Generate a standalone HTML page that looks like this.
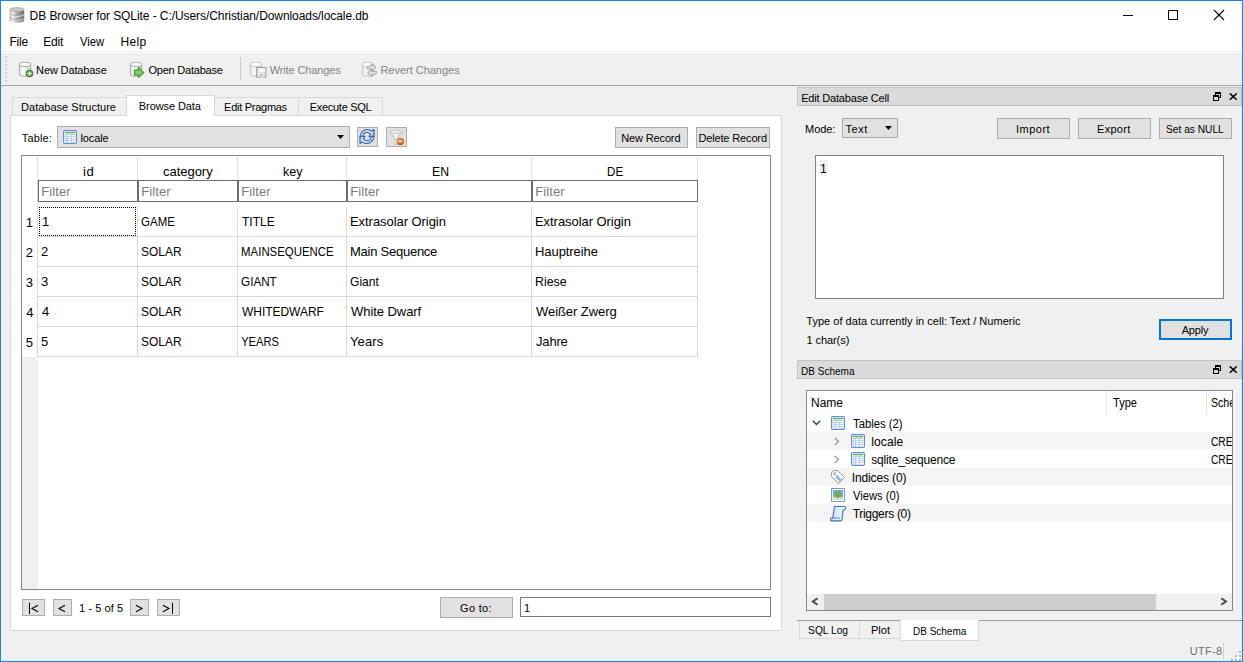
<!DOCTYPE html>
<html><head><meta charset="utf-8"><style>
html,body{margin:0;padding:0;}
body{width:1243px;height:662px;position:relative;overflow:hidden;background:#f0f0f0;font-family:"Liberation Sans",sans-serif;}
.t{position:absolute;white-space:nowrap;}
div,svg{position:absolute;}
</style></head><body>
<div style="position:absolute;left:1px;top:1px;width:1241px;height:52px;background:#fff;"></div>
<div style="position:absolute;left:1px;top:51px;width:1241px;height:1px;background:#f0f0f0;"></div>
<div style="position:absolute;left:1px;top:85px;width:1241px;height:1px;background:#a0a0a0;"></div>
<svg style="position:absolute;left:9px;top:7px" width="16" height="16" viewBox="0 0 16 16"><defs><linearGradient id="cy" x1="0" x2="1"><stop offset="0" stop-color="#a8a8a8"/><stop offset="0.18" stop-color="#f6f6f6"/><stop offset="0.45" stop-color="#b4b4b4"/><stop offset="1" stop-color="#6a6a6a"/></linearGradient></defs>
<path d="M0.8 2.5 v11 a7.2 2 0 0 0 14.4 0 v-11 z" fill="url(#cy)"/>
<ellipse cx="8" cy="2.5" rx="7.2" ry="2" fill="#c6c6c6" stroke="#a0a0a0" stroke-width="0.6"/>
<path d="M0.8 6.6 a7.2 2 0 0 0 14.4 0" fill="none" stroke="#8a8a8a" stroke-width="0.7"/>
<path d="M0.8 7.4 a7.2 2 0 0 0 14.4 0" fill="none" stroke="#eeeeee" stroke-width="0.8"/>
<path d="M0.8 10.6 a7.2 2 0 0 0 14.4 0" fill="none" stroke="#8a8a8a" stroke-width="0.7"/>
<path d="M0.8 11.4 a7.2 2 0 0 0 14.4 0" fill="none" stroke="#eeeeee" stroke-width="0.8"/></svg>
<div class="t" style="left:29.6px;top:9px;font-size:12px;line-height:14px;color:#000;letter-spacing:-0.074px;">DB Browser for SQLite - C:/Users/Christian/Downloads/locale.db</div>
<div style="position:absolute;left:1123px;top:15px;width:10px;height:1px;background:#000;"></div>
<div style="position:absolute;left:1168px;top:10px;width:10px;height:10px;box-sizing:border-box;border:1px solid #000;"></div>
<svg style="position:absolute;left:1213px;top:9px" width="12" height="12" viewBox="0 0 12 12"><path d="M1 1 L11 11 M11 1 L1 11" stroke="#000" stroke-width="1.1"/></svg>
<div class="t" style="left:9.45px;top:35px;font-size:12px;line-height:14px;color:#000;letter-spacing:-0.2px;">File</div>
<div class="t" style="left:43.3px;top:35px;font-size:12px;line-height:14px;color:#000;letter-spacing:-0.233px;">Edit</div>
<div class="t" style="left:80.0px;top:35px;font-size:12px;line-height:14px;color:#000;transform:scaleX(0.9385);transform-origin:0px 0;">View</div>
<div class="t" style="left:120.5px;top:35px;font-size:12px;line-height:14px;color:#000;letter-spacing:0.367px;">Help</div>
<div style="position:absolute;left:6px;top:56px;width:1px;height:1px;background:#a0a0a0;"></div>
<div style="position:absolute;left:5px;top:57px;width:1px;height:1px;background:#c8c8c8;"></div>
<div style="position:absolute;left:6px;top:60px;width:1px;height:1px;background:#a0a0a0;"></div>
<div style="position:absolute;left:5px;top:61px;width:1px;height:1px;background:#c8c8c8;"></div>
<div style="position:absolute;left:6px;top:64px;width:1px;height:1px;background:#a0a0a0;"></div>
<div style="position:absolute;left:5px;top:65px;width:1px;height:1px;background:#c8c8c8;"></div>
<div style="position:absolute;left:6px;top:68px;width:1px;height:1px;background:#a0a0a0;"></div>
<div style="position:absolute;left:5px;top:69px;width:1px;height:1px;background:#c8c8c8;"></div>
<div style="position:absolute;left:6px;top:72px;width:1px;height:1px;background:#a0a0a0;"></div>
<div style="position:absolute;left:5px;top:73px;width:1px;height:1px;background:#c8c8c8;"></div>
<div style="position:absolute;left:6px;top:76px;width:1px;height:1px;background:#a0a0a0;"></div>
<div style="position:absolute;left:5px;top:77px;width:1px;height:1px;background:#c8c8c8;"></div>
<div style="position:absolute;left:6px;top:80px;width:1px;height:1px;background:#a0a0a0;"></div>
<div style="position:absolute;left:5px;top:81px;width:1px;height:1px;background:#c8c8c8;"></div>
<div style="position:absolute;left:240px;top:57px;width:1px;height:23px;background:#c8c8c8;"></div>
<svg style="position:absolute;left:18px;top:60px" width="16" height="18" viewBox="0 0 16 18"><defs><linearGradient id="cga" x1="0" x2="1"><stop offset="0" stop-color="#e0e0e0"/><stop offset="0.3" stop-color="#fafafa"/><stop offset="1" stop-color="#d4d4d4"/></linearGradient></defs>
<path d="M1.4 4.4 v9.5 a5.6 2.2 0 0 0 11.2 0 v-9.5" fill="url(#cga)" stroke="#b0b0b0" stroke-width="1.1"/>
<ellipse cx="7" cy="4.4" rx="5.6" ry="2.2" fill="#fcfcfc" stroke="#b0b0b0" stroke-width="1.1"/><circle cx="11.5" cy="13.5" r="3.5" fill="#4c9c34" stroke="#2f7a1e" stroke-width="0.7"/><path d="M11.5 11.4 v4.2 M9.4 13.5 h4.2" stroke="#fff" stroke-width="1.4"/></svg>
<div class="t" style="left:36.1px;top:64px;font-size:11px;line-height:12px;color:#000;letter-spacing:-0.136px;">New Database</div>
<svg style="position:absolute;left:129px;top:60px" width="18" height="18" viewBox="0 0 18 18"><defs><linearGradient id="cgb" x1="0" x2="1"><stop offset="0" stop-color="#e0e0e0"/><stop offset="0.3" stop-color="#fafafa"/><stop offset="1" stop-color="#d4d4d4"/></linearGradient></defs>
<path d="M1.4 4.4 v9.5 a5.6 2.2 0 0 0 11.2 0 v-9.5" fill="url(#cgb)" stroke="#b0b0b0" stroke-width="1.1"/>
<ellipse cx="7" cy="4.4" rx="5.6" ry="2.2" fill="#fcfcfc" stroke="#b0b0b0" stroke-width="1.1"/><path d="M5.5 10 h4 v-2.4 l5.2 5 l-5.2 4.8 v-2.6 h-4 z" fill="#8cc77a" stroke="#3a9a22" stroke-width="1.2" stroke-linejoin="round"/></svg>
<div class="t" style="left:148.5px;top:64px;font-size:11px;line-height:12px;color:#000;letter-spacing:-0.225px;">Open Database</div>
<svg style="position:absolute;left:249px;top:60px" width="18" height="18" viewBox="0 0 18 18"><defs><linearGradient id="cgc" x1="0" x2="1"><stop offset="0" stop-color="#e0e0e0"/><stop offset="0.3" stop-color="#fafafa"/><stop offset="1" stop-color="#d4d4d4"/></linearGradient></defs>
<path d="M1.4 4.4 v9.5 a5.6 2.2 0 0 0 11.2 0 v-9.5" fill="url(#cgc)" stroke="#cccccc" stroke-width="1.1"/>
<ellipse cx="7" cy="4.4" rx="5.6" ry="2.2" fill="#fcfcfc" stroke="#cccccc" stroke-width="1.1"/><rect x="7.5" y="7.5" width="9.5" height="9.5" fill="#dcdcdc" stroke="#a4a4a4"/><rect x="8.6" y="8.5" width="7.3" height="3.2" fill="#fff"/><rect x="9.2" y="9.2" width="1" height="1.2" fill="#9a9a9a"/><rect x="9.5" y="13.2" width="5.5" height="3" fill="#fff"/><rect x="10.2" y="14.1" width="4" height="1.2" fill="#a0a0a0"/></svg>
<div class="t" style="left:269.7px;top:64px;font-size:11px;line-height:12px;color:#838383;letter-spacing:-0.125px;">Write Changes</div>
<svg style="position:absolute;left:361px;top:60px" width="18" height="18" viewBox="0 0 18 18"><defs><linearGradient id="cgd" x1="0" x2="1"><stop offset="0" stop-color="#e0e0e0"/><stop offset="0.3" stop-color="#fafafa"/><stop offset="1" stop-color="#d4d4d4"/></linearGradient></defs>
<path d="M1.4 4.4 v9.5 a5.6 2.2 0 0 0 11.2 0 v-9.5" fill="url(#cgd)" stroke="#cccccc" stroke-width="1.1"/>
<ellipse cx="7" cy="4.4" rx="5.6" ry="2.2" fill="#fcfcfc" stroke="#cccccc" stroke-width="1.1"/><path d="M5.5 8.5 C6 6.5 8 6 10.5 6 v-2.2 l4.5 3.7 l-4.5 3.7 v-2.2 C8.5 9 7 9.2 5.5 8.5 z" fill="#e0e0e0" stroke="#989898" stroke-width="0.9"/><path d="M16 12 C15.5 14 13.5 14.5 11 14.5 v2.2 l-4.5 -3.7 l4.5 -3.7 v2.2 C13 11.5 14.5 11.3 16 12 z" fill="#e0e0e0" stroke="#989898" stroke-width="0.9"/></svg>
<div class="t" style="left:380.4px;top:64px;font-size:11px;line-height:12px;color:#838383;letter-spacing:-0.015px;">Revert Changes</div>
<div style="position:absolute;left:10px;top:115px;width:772px;height:516px;box-sizing:border-box;border:1px solid #d9d9d9;background:#fff;"></div>
<div style="position:absolute;left:12px;top:97px;width:116px;height:19px;box-sizing:border-box;border:1px solid #d9d9d9;background:#f0f0f0;"></div>
<div style="position:absolute;left:214px;top:97px;width:85px;height:19px;box-sizing:border-box;border:1px solid #d9d9d9;background:#f0f0f0;"></div>
<div style="position:absolute;left:298px;top:97px;width:85px;height:19px;box-sizing:border-box;border:1px solid #d9d9d9;background:#f0f0f0;"></div>
<div style="left:126px;top:95px;width:89px;height:21px;box-sizing:border-box;border:1px solid #d9d9d9;border-bottom:none;background:#fff"></div>
<div class="t" style="left:21.1px;top:101px;font-size:11px;line-height:12px;color:#000;letter-spacing:0.006px;">Database Structure</div>
<div class="t" style="left:138.8px;top:100px;font-size:11px;line-height:12px;color:#000;letter-spacing:-0.08px;">Browse Data</div>
<div class="t" style="left:224.1px;top:101px;font-size:11px;line-height:12px;color:#000;letter-spacing:-0.273px;">Edit Pragmas</div>
<div class="t" style="left:309.8px;top:101px;font-size:11px;line-height:12px;color:#000;letter-spacing:-0.3px;">Execute SQL</div>
<div class="t" style="left:21.8px;top:132px;font-size:11px;line-height:12px;color:#000;letter-spacing:0.12px;">Table:</div>
<div style="position:absolute;left:57px;top:126px;width:293px;height:22px;box-sizing:border-box;border:1px solid #adadad;background:#e1e1e1;"></div>
<svg style="position:absolute;left:63px;top:130px" width="14" height="14" viewBox="0 0 14 14"><rect x="0.6" y="0.6" width="12.8" height="12.8" rx="1.2" fill="#fff" stroke="#5d8fd6" stroke-width="1.2"/>
<rect x="2" y="2" width="10" height="1.3" fill="#5bb45b"/>
<rect x="2" y="4" width="10" height="8.4" fill="#b4cdf0"/><rect x="2.6" y="5" width="1.4" height="1.1" fill="#fff"/><rect x="4.9" y="5" width="3" height="1.1" fill="#fff"/><rect x="8.9" y="5" width="3.2" height="1.1" fill="#fff"/><rect x="2.6" y="7" width="1.4" height="1.1" fill="#fff"/><rect x="4.9" y="7" width="3" height="1.1" fill="#fff"/><rect x="8.9" y="7" width="3.2" height="1.1" fill="#fff"/><rect x="2.6" y="9" width="1.4" height="1.1" fill="#fff"/><rect x="4.9" y="9" width="3" height="1.1" fill="#fff"/><rect x="8.9" y="9" width="3.2" height="1.1" fill="#fff"/><rect x="2.6" y="11" width="1.4" height="1.1" fill="#fff"/><rect x="4.9" y="11" width="3" height="1.1" fill="#fff"/><rect x="8.9" y="11" width="3.2" height="1.1" fill="#fff"/></svg>
<div class="t" style="left:80.4px;top:132px;font-size:11px;line-height:12px;color:#000;letter-spacing:-0.08px;">locale</div>
<svg style="position:absolute;left:337px;top:135px" width="7" height="4" viewBox="0 0 7 4"><path d="M0 0 h7 l-3.5 4 z" fill="#000"/></svg>
<div style="position:absolute;left:357px;top:127px;width:21px;height:20px;box-sizing:border-box;border:1px solid #adadad;background:#e1e1e1;"></div>
<svg style="position:absolute;left:359px;top:128px" width="17" height="18" viewBox="0 0 17 18"><defs><linearGradient id="rg" x1="0" y1="0" x2="1" y2="1"><stop offset="0" stop-color="#9fc0ee"/><stop offset="0.5" stop-color="#f2f7ff"/><stop offset="1" stop-color="#7aa3de"/></linearGradient></defs>
<path d="M1 8.5 C1.5 4 5 1.5 8 1.5 C10 1.5 11.5 2.2 12.5 3.2 L15 1.5 L15 8.8 L10 8.8 L11.5 6.2 C10.5 5 9.3 4.3 8 4.3 C6 4.3 4 6 3.6 8.5 Z" fill="url(#rg)" stroke="#2c62b2" stroke-width="1.1" stroke-linejoin="round"/>
<path d="M15 8.5 C14.5 13 11 15.5 8 15.5 C6 15.5 4.5 14.8 3.5 13.8 L1 15.5 L1 8.2 L6 8.2 L4.5 10.8 C5.5 12 6.7 12.7 8 12.7 C10 12.7 12 11 12.4 8.5 Z" fill="url(#rg)" stroke="#2c62b2" stroke-width="1.1" stroke-linejoin="round"/></svg>
<div style="position:absolute;left:386px;top:127px;width:21px;height:20px;box-sizing:border-box;border:1px solid #adadad;background:#e1e1e1;"></div>
<svg style="position:absolute;left:388px;top:128px" width="18" height="18" viewBox="0 0 18 18"><defs><linearGradient id="fg" x1="0" x2="1"><stop offset="0" stop-color="#d4d4d4"/><stop offset="0.5" stop-color="#fafafa"/><stop offset="1" stop-color="#c4c4c4"/></linearGradient>
<radialGradient id="og" cx="0.4" cy="0.35" r="0.7"><stop offset="0" stop-color="#ff9d40"/><stop offset="1" stop-color="#c94500"/></radialGradient></defs>
<path d="M1.5 3.8 L7 10.5 L7 16.5 L9 16.5 L9 10.5 L14.5 3.8 Z" fill="url(#fg)" stroke="#b8b8b8" stroke-width="0.9" stroke-linejoin="round"/>
<ellipse cx="8" cy="3.8" rx="6.5" ry="1.7" fill="#ececec" stroke="#c0c0c0" stroke-width="0.8"/>
<circle cx="12.4" cy="13.4" r="3.6" fill="url(#og)"/><rect x="10.3" y="12.7" width="4.2" height="1.4" fill="#fff"/></svg>
<div style="position:absolute;left:615px;top:127px;width:73px;height:21px;box-sizing:border-box;border:1px solid #adadad;background:#e1e1e1;"></div>
<div class="t" style="left:621.2px;top:132px;font-size:11px;line-height:12px;color:#000;letter-spacing:-0.133px;">New Record</div>
<div style="position:absolute;left:696px;top:127px;width:74px;height:21px;box-sizing:border-box;border:1px solid #adadad;background:#e1e1e1;"></div>
<div class="t" style="left:698.4px;top:132px;font-size:11px;line-height:12px;color:#000;letter-spacing:-0.142px;">Delete Record</div>
<div style="position:absolute;left:21px;top:155px;width:750px;height:435px;box-sizing:border-box;border:1px solid #828790;background:#fff;"></div>
<div style="position:absolute;left:22px;top:357px;width:16px;height:232px;background:#f0f0f0;"></div>
<div style="position:absolute;left:37px;top:156px;width:1px;height:24px;background:#e5e5e5;"></div>
<div style="position:absolute;left:137px;top:156px;width:1px;height:24px;background:#e5e5e5;"></div>
<div style="position:absolute;left:237px;top:156px;width:1px;height:24px;background:#e5e5e5;"></div>
<div style="position:absolute;left:346px;top:156px;width:1px;height:24px;background:#e5e5e5;"></div>
<div style="position:absolute;left:531px;top:156px;width:1px;height:24px;background:#e5e5e5;"></div>
<div style="position:absolute;left:697px;top:156px;width:1px;height:24px;background:#e5e5e5;"></div>
<div class="t" style="left:82.9px;top:164px;font-size:13px;line-height:15px;color:#000;letter-spacing:0.6px;">id</div>
<div class="t" style="left:163.1px;top:164px;font-size:13px;line-height:15px;color:#000;letter-spacing:-0.043px;">category</div>
<div class="t" style="left:283.3px;top:164px;font-size:13px;line-height:15px;color:#000;transform:scaleX(0.9632);transform-origin:1px 0;">key</div>
<div class="t" style="left:432.0px;top:164px;font-size:13px;line-height:15px;color:#000;transform:scaleX(0.9438);transform-origin:1px 0;">EN</div>
<div class="t" style="left:606.7px;top:164px;font-size:13px;line-height:15px;color:#000;transform:scaleX(0.8882);transform-origin:1px 0;">DE</div>
<div style="position:absolute;left:38px;top:180px;width:100px;height:22px;box-sizing:border-box;border:1px solid #6d6d6d;background:#fff;"></div>
<div class="t" style="left:41.3px;top:184px;font-size:13px;line-height:15px;color:#7b7b7b;letter-spacing:0.08px;">Filter</div>
<div style="position:absolute;left:138px;top:180px;width:100px;height:22px;box-sizing:border-box;border:1px solid #6d6d6d;background:#fff;"></div>
<div class="t" style="left:141.3px;top:184px;font-size:13px;line-height:15px;color:#7b7b7b;letter-spacing:0.08px;">Filter</div>
<div style="position:absolute;left:238px;top:180px;width:109px;height:22px;box-sizing:border-box;border:1px solid #6d6d6d;background:#fff;"></div>
<div class="t" style="left:241.3px;top:184px;font-size:13px;line-height:15px;color:#7b7b7b;letter-spacing:0.08px;">Filter</div>
<div style="position:absolute;left:347px;top:180px;width:185px;height:22px;box-sizing:border-box;border:1px solid #6d6d6d;background:#fff;"></div>
<div class="t" style="left:350.3px;top:184px;font-size:13px;line-height:15px;color:#7b7b7b;letter-spacing:0.08px;">Filter</div>
<div style="position:absolute;left:532px;top:180px;width:166px;height:22px;box-sizing:border-box;border:1px solid #6d6d6d;background:#fff;"></div>
<div class="t" style="left:535.3px;top:184px;font-size:13px;line-height:15px;color:#7b7b7b;letter-spacing:0.08px;">Filter</div>
<div style="position:absolute;left:37px;top:180px;width:1px;height:177px;background:#d8d8d8;"></div>
<div style="position:absolute;left:38px;top:236px;width:660px;height:1px;background:#d8d8d8;"></div>
<div style="position:absolute;left:137px;top:207px;width:1px;height:30px;background:#d8d8d8;"></div>
<div style="position:absolute;left:237px;top:207px;width:1px;height:30px;background:#d8d8d8;"></div>
<div style="position:absolute;left:346px;top:207px;width:1px;height:30px;background:#d8d8d8;"></div>
<div style="position:absolute;left:531px;top:207px;width:1px;height:30px;background:#d8d8d8;"></div>
<div style="position:absolute;left:697px;top:207px;width:1px;height:30px;background:#d8d8d8;"></div>
<div class="t" style="left:25.8px;top:215px;font-size:13px;line-height:15px;color:#000;">1</div>
<div class="t" style="left:41.9px;top:214px;font-size:13px;line-height:15px;color:#000;">1</div>
<div class="t" style="left:141.0px;top:214px;font-size:13px;line-height:15px;color:#000;transform:scaleX(0.8811);transform-origin:1px 0;">GAME</div>
<div class="t" style="left:242.0px;top:214px;font-size:13px;line-height:15px;color:#000;transform:scaleX(0.9229);transform-origin:0px 0;">TITLE</div>
<div class="t" style="left:350.0px;top:214px;font-size:13px;line-height:15px;color:#000;letter-spacing:-0.056px;">Extrasolar Origin</div>
<div class="t" style="left:535.0px;top:214px;font-size:13px;line-height:15px;color:#000;letter-spacing:-0.056px;">Extrasolar Origin</div>
<div style="position:absolute;left:38px;top:266px;width:660px;height:1px;background:#d8d8d8;"></div>
<div style="position:absolute;left:137px;top:236px;width:1px;height:31px;background:#d8d8d8;"></div>
<div style="position:absolute;left:237px;top:236px;width:1px;height:31px;background:#d8d8d8;"></div>
<div style="position:absolute;left:346px;top:236px;width:1px;height:31px;background:#d8d8d8;"></div>
<div style="position:absolute;left:531px;top:236px;width:1px;height:31px;background:#d8d8d8;"></div>
<div style="position:absolute;left:697px;top:236px;width:1px;height:31px;background:#d8d8d8;"></div>
<div class="t" style="left:25.8px;top:245px;font-size:13px;line-height:15px;color:#000;">2</div>
<div class="t" style="left:40.9px;top:244px;font-size:13px;line-height:15px;color:#000;">2</div>
<div class="t" style="left:141.0px;top:244px;font-size:13px;line-height:15px;color:#000;transform:scaleX(0.919);transform-origin:1px 0;">SOLAR</div>
<div class="t" style="left:241.0px;top:244px;font-size:13px;line-height:15px;color:#000;transform:scaleX(0.8769);transform-origin:1px 0;">MAINSEQUENCE</div>
<div class="t" style="left:350.0px;top:244px;font-size:13px;line-height:15px;color:#000;letter-spacing:-0.25px;">Main Sequence</div>
<div class="t" style="left:535.0px;top:244px;font-size:13px;line-height:15px;color:#000;letter-spacing:-0.067px;">Hauptreihe</div>
<div style="position:absolute;left:38px;top:296px;width:660px;height:1px;background:#d8d8d8;"></div>
<div style="position:absolute;left:137px;top:266px;width:1px;height:31px;background:#d8d8d8;"></div>
<div style="position:absolute;left:237px;top:266px;width:1px;height:31px;background:#d8d8d8;"></div>
<div style="position:absolute;left:346px;top:266px;width:1px;height:31px;background:#d8d8d8;"></div>
<div style="position:absolute;left:531px;top:266px;width:1px;height:31px;background:#d8d8d8;"></div>
<div style="position:absolute;left:697px;top:266px;width:1px;height:31px;background:#d8d8d8;"></div>
<div class="t" style="left:25.8px;top:275px;font-size:13px;line-height:15px;color:#000;">3</div>
<div class="t" style="left:40.9px;top:274px;font-size:13px;line-height:15px;color:#000;">3</div>
<div class="t" style="left:141.0px;top:274px;font-size:13px;line-height:15px;color:#000;transform:scaleX(0.919);transform-origin:1px 0;">SOLAR</div>
<div class="t" style="left:241.0px;top:274px;font-size:13px;line-height:15px;color:#000;transform:scaleX(0.8974);transform-origin:1px 0;">GIANT</div>
<div class="t" style="left:350.0px;top:274px;font-size:13px;line-height:15px;color:#000;transform:scaleX(0.9267);transform-origin:1px 0;">Giant</div>
<div class="t" style="left:535.0px;top:274px;font-size:13px;line-height:15px;color:#000;transform:scaleX(0.95);transform-origin:1px 0;">Riese</div>
<div style="position:absolute;left:38px;top:326px;width:660px;height:1px;background:#d8d8d8;"></div>
<div style="position:absolute;left:137px;top:296px;width:1px;height:31px;background:#d8d8d8;"></div>
<div style="position:absolute;left:237px;top:296px;width:1px;height:31px;background:#d8d8d8;"></div>
<div style="position:absolute;left:346px;top:296px;width:1px;height:31px;background:#d8d8d8;"></div>
<div style="position:absolute;left:531px;top:296px;width:1px;height:31px;background:#d8d8d8;"></div>
<div style="position:absolute;left:697px;top:296px;width:1px;height:31px;background:#d8d8d8;"></div>
<div class="t" style="left:26.3px;top:305px;font-size:13px;line-height:15px;color:#000;">4</div>
<div class="t" style="left:41.9px;top:304px;font-size:13px;line-height:15px;color:#000;">4</div>
<div class="t" style="left:141.0px;top:304px;font-size:13px;line-height:15px;color:#000;transform:scaleX(0.919);transform-origin:1px 0;">SOLAR</div>
<div class="t" style="left:242.0px;top:304px;font-size:13px;line-height:15px;color:#000;transform:scaleX(0.9191);transform-origin:0px 0;">WHITEDWARF</div>
<div class="t" style="left:351.0px;top:304px;font-size:13px;line-height:15px;color:#000;letter-spacing:-0.06px;">White Dwarf</div>
<div class="t" style="left:536.0px;top:304px;font-size:13px;line-height:15px;color:#000;letter-spacing:-0.064px;">Weißer Zwerg</div>
<div style="position:absolute;left:38px;top:356px;width:660px;height:1px;background:#d8d8d8;"></div>
<div style="position:absolute;left:137px;top:326px;width:1px;height:31px;background:#d8d8d8;"></div>
<div style="position:absolute;left:237px;top:326px;width:1px;height:31px;background:#d8d8d8;"></div>
<div style="position:absolute;left:346px;top:326px;width:1px;height:31px;background:#d8d8d8;"></div>
<div style="position:absolute;left:531px;top:326px;width:1px;height:31px;background:#d8d8d8;"></div>
<div style="position:absolute;left:697px;top:326px;width:1px;height:31px;background:#d8d8d8;"></div>
<div class="t" style="left:25.8px;top:335px;font-size:13px;line-height:15px;color:#000;">5</div>
<div class="t" style="left:40.9px;top:334px;font-size:13px;line-height:15px;color:#000;">5</div>
<div class="t" style="left:141.0px;top:334px;font-size:13px;line-height:15px;color:#000;transform:scaleX(0.919);transform-origin:1px 0;">SOLAR</div>
<div class="t" style="left:241.0px;top:334px;font-size:13px;line-height:15px;color:#000;transform:scaleX(0.8581);transform-origin:1px 0;">YEARS</div>
<div class="t" style="left:350.0px;top:334px;font-size:13px;line-height:15px;color:#000;letter-spacing:0.125px;">Years</div>
<div class="t" style="left:536.0px;top:334px;font-size:13px;line-height:15px;color:#000;letter-spacing:-0.175px;">Jahre</div>
<div style="left:39px;top:207px;width:97px;height:29px;box-sizing:border-box;border:1px dotted #000"></div>
<div style="position:absolute;left:22px;top:599px;width:23px;height:17px;box-sizing:border-box;border:1px solid #adadad;background:#e1e1e1;"></div>
<div style="position:absolute;left:53px;top:599px;width:19px;height:17px;box-sizing:border-box;border:1px solid #adadad;background:#e1e1e1;"></div>
<div style="position:absolute;left:130px;top:599px;width:19px;height:17px;box-sizing:border-box;border:1px solid #adadad;background:#e1e1e1;"></div>
<div style="position:absolute;left:157px;top:599px;width:23px;height:17px;box-sizing:border-box;border:1px solid #adadad;background:#e1e1e1;"></div>
<svg style="position:absolute;left:20px;top:600px" width="170" height="16" viewBox="0 0 170 16"><g fill="none" stroke="#000" stroke-width="1.05"><path d="M9.5 2.8 V14"/><path d="M18 5.3 L12 8.5 L18 11.7"/><path d="M45 5.3 L39 8.5 L45 11.7"/><path d="M116 5.3 L122 8.5 L116 11.7"/><path d="M143 5.3 L149 8.5 L143 11.7"/><path d="M152.5 2.8 V14"/></g></svg>
<div class="t" style="left:79.1px;top:602px;font-size:11px;line-height:12px;color:#000;letter-spacing:0.056px;">1 - 5 of 5</div>
<div style="position:absolute;left:440px;top:597px;width:73px;height:21px;box-sizing:border-box;border:1px solid #adadad;background:#e1e1e1;"></div>
<div class="t" style="left:460.1px;top:602px;font-size:11px;line-height:12px;color:#000;letter-spacing:0.3px;">Go to:</div>
<div style="position:absolute;left:520px;top:597px;width:251px;height:20px;box-sizing:border-box;border:1px solid #7a7a7a;background:#fff;"></div>
<div class="t" style="left:523.9px;top:602px;font-size:11px;line-height:12px;color:#000;">1</div>
<div style="position:absolute;left:797px;top:87px;width:445px;height:19px;box-sizing:border-box;border:1px solid #c2c2c2;background:#dadada;"></div>
<div class="t" style="left:801.2px;top:92px;font-size:11px;line-height:12px;color:#000;letter-spacing:-0.182px;">Edit Database Cell</div>
<svg style="position:absolute;left:1213px;top:92px" width="9" height="9" viewBox="0 0 9 9"><rect x="2" y="0" width="6" height="2" fill="#000"/><rect x="7" y="0" width="1" height="6" fill="#000"/><rect x="6" y="5" width="2" height="1" fill="#000"/><rect x="2" y="0" width="1" height="3" fill="#000"/><rect x="0" y="3" width="6" height="2" fill="#000"/><rect x="0" y="3" width="1" height="6" fill="#000"/><rect x="5" y="3" width="1" height="6" fill="#000"/><rect x="0" y="8" width="6" height="1" fill="#000"/></svg>
<svg style="position:absolute;left:1229px;top:93px" width="9" height="8" viewBox="0 0 9 8"><path d="M0.8 0.4 L7.7 6.8 M7.7 0.4 L0.8 6.8" stroke="#000" stroke-width="1.5"/></svg>
<div class="t" style="left:805.1px;top:123px;font-size:11px;line-height:12px;color:#000;letter-spacing:-0.075px;">Mode:</div>
<div style="position:absolute;left:842px;top:118px;width:56px;height:20px;box-sizing:border-box;border:1px solid #adadad;background:#e1e1e1;"></div>
<div class="t" style="left:845.4px;top:123px;font-size:11px;line-height:12px;color:#000;letter-spacing:0.6px;">Text</div>
<svg style="position:absolute;left:885px;top:126px" width="7" height="4" viewBox="0 0 7 4"><path d="M0 0 h7 l-3.5 4 z" fill="#000"/></svg>
<div style="position:absolute;left:997px;top:118px;width:73px;height:21px;box-sizing:border-box;border:1px solid #adadad;background:#e1e1e1;"></div>
<div class="t" style="left:1016.0px;top:123px;font-size:11px;line-height:12px;color:#000;letter-spacing:0.5px;">Import</div>
<div style="position:absolute;left:1078px;top:118px;width:73px;height:21px;box-sizing:border-box;border:1px solid #adadad;background:#e1e1e1;"></div>
<div class="t" style="left:1097.1px;top:123px;font-size:11px;line-height:12px;color:#000;letter-spacing:0.26px;">Export</div>
<div style="position:absolute;left:1159px;top:118px;width:73px;height:21px;box-sizing:border-box;border:1px solid #adadad;background:#e1e1e1;"></div>
<div class="t" style="left:1166.2px;top:123px;font-size:11px;line-height:12px;color:#000;transform:scaleX(0.9246);transform-origin:1px 0;">Set as NULL</div>
<div style="position:absolute;left:815px;top:155px;width:409px;height:144px;box-sizing:border-box;border:1px solid #828282;background:#fff;"></div>
<div style="position:absolute;left:820px;top:160px;width:7px;height:16px;background:#f0f0f0;"></div>
<div class="t" style="left:820px;top:162px;font-size:12px;line-height:14px;color:#000;">1</div>
<div class="t" style="left:806.3px;top:315px;font-size:11px;line-height:12px;color:#000;letter-spacing:0.022px;">Type of data currently in cell: Text / Numeric</div>
<div class="t" style="left:806.4px;top:334px;font-size:11px;line-height:12px;color:#000;letter-spacing:-0.062px;">1 char(s)</div>
<div style="position:absolute;left:1159px;top:319px;width:73px;height:21px;background:#e1e1e1;box-sizing:border-box;border:2px solid #0078d7;"></div>
<div class="t" style="left:1181.7px;top:324px;font-size:11px;line-height:12px;color:#000;letter-spacing:-0.175px;">Apply</div>
<div style="position:absolute;left:797px;top:360px;width:445px;height:19px;box-sizing:border-box;border:1px solid #c2c2c2;background:#dadada;"></div>
<div class="t" style="left:801.1px;top:365px;font-size:11px;line-height:12px;color:#000;transform:scaleX(0.9103);transform-origin:1px 0;">DB Schema</div>
<svg style="position:absolute;left:1213px;top:365px" width="9" height="9" viewBox="0 0 9 9"><rect x="2" y="0" width="6" height="2" fill="#000"/><rect x="7" y="0" width="1" height="6" fill="#000"/><rect x="6" y="5" width="2" height="1" fill="#000"/><rect x="2" y="0" width="1" height="3" fill="#000"/><rect x="0" y="3" width="6" height="2" fill="#000"/><rect x="0" y="3" width="1" height="6" fill="#000"/><rect x="5" y="3" width="1" height="6" fill="#000"/><rect x="0" y="8" width="6" height="1" fill="#000"/></svg>
<svg style="position:absolute;left:1229px;top:366px" width="9" height="8" viewBox="0 0 9 8"><path d="M0.8 0.4 L7.7 6.8 M7.7 0.4 L0.8 6.8" stroke="#000" stroke-width="1.5"/></svg>
<div style="position:absolute;left:806px;top:390px;width:427px;height:221px;box-sizing:border-box;border:1px solid #828790;background:#fff;"></div>
<div style="position:absolute;left:1106px;top:391px;width:1px;height:23px;background:#e5e5e5;"></div>
<div style="position:absolute;left:1206px;top:391px;width:1px;height:23px;background:#e5e5e5;"></div>
<div class="t" style="left:811.1px;top:396px;font-size:12px;line-height:14px;color:#000;letter-spacing:-0.067px;">Name</div>
<div class="t" style="left:1112.8px;top:396px;font-size:12px;line-height:14px;color:#000;transform:scaleX(0.9192);transform-origin:0px 0;">Type</div>
<div style="left:1211px;top:391px;width:21px;height:22px;overflow:hidden"><div class="t" style="left:0;top:5px;font-size:12px;line-height:14px;transform:scaleX(0.88);transform-origin:0 0">Schema</div></div>
<svg style="position:absolute;left:831px;top:416px" width="14" height="14" viewBox="0 0 14 14"><rect x="0.6" y="0.6" width="12.8" height="12.8" rx="1.2" fill="#fff" stroke="#5d8fd6" stroke-width="1.2"/>
<rect x="2" y="2" width="10" height="1.3" fill="#5bb45b"/>
<rect x="2" y="4" width="10" height="8.4" fill="#b4cdf0"/><rect x="2.6" y="5" width="1.4" height="1.1" fill="#fff"/><rect x="4.9" y="5" width="3" height="1.1" fill="#fff"/><rect x="8.9" y="5" width="3.2" height="1.1" fill="#fff"/><rect x="2.6" y="7" width="1.4" height="1.1" fill="#fff"/><rect x="4.9" y="7" width="3" height="1.1" fill="#fff"/><rect x="8.9" y="7" width="3.2" height="1.1" fill="#fff"/><rect x="2.6" y="9" width="1.4" height="1.1" fill="#fff"/><rect x="4.9" y="9" width="3" height="1.1" fill="#fff"/><rect x="8.9" y="9" width="3.2" height="1.1" fill="#fff"/><rect x="2.6" y="11" width="1.4" height="1.1" fill="#fff"/><rect x="4.9" y="11" width="3" height="1.1" fill="#fff"/><rect x="8.9" y="11" width="3.2" height="1.1" fill="#fff"/></svg>
<div class="t" style="left:852.7px;top:417px;font-size:12px;line-height:14px;color:#000;transform:scaleX(0.9404);transform-origin:0px 0;">Tables (2)</div>
<svg style="position:absolute;left:812px;top:420px" width="9" height="6" viewBox="0 0 9 6"><path d="M0.8 0.8 L4.5 4.5 L8.2 0.8" fill="none" stroke="#404040" stroke-width="1.4"/></svg>
<div style="position:absolute;left:807px;top:432px;width:425px;height:18px;background:#f5f5f5;"></div>
<svg style="position:absolute;left:851px;top:434px" width="14" height="14" viewBox="0 0 14 14"><rect x="0.6" y="0.6" width="12.8" height="12.8" rx="1.2" fill="#fff" stroke="#5d8fd6" stroke-width="1.2"/>
<rect x="2" y="2" width="10" height="1.3" fill="#5bb45b"/>
<rect x="2" y="4" width="10" height="8.4" fill="#b4cdf0"/><rect x="2.6" y="5" width="1.4" height="1.1" fill="#fff"/><rect x="4.9" y="5" width="3" height="1.1" fill="#fff"/><rect x="8.9" y="5" width="3.2" height="1.1" fill="#fff"/><rect x="2.6" y="7" width="1.4" height="1.1" fill="#fff"/><rect x="4.9" y="7" width="3" height="1.1" fill="#fff"/><rect x="8.9" y="7" width="3.2" height="1.1" fill="#fff"/><rect x="2.6" y="9" width="1.4" height="1.1" fill="#fff"/><rect x="4.9" y="9" width="3" height="1.1" fill="#fff"/><rect x="8.9" y="9" width="3.2" height="1.1" fill="#fff"/><rect x="2.6" y="11" width="1.4" height="1.1" fill="#fff"/><rect x="4.9" y="11" width="3" height="1.1" fill="#fff"/><rect x="8.9" y="11" width="3.2" height="1.1" fill="#fff"/></svg>
<div class="t" style="left:871.3px;top:435px;font-size:12px;line-height:14px;color:#000;letter-spacing:0.1px;">locale</div>
<svg style="position:absolute;left:834px;top:437px" width="6" height="9" viewBox="0 0 6 9"><path d="M0.8 0.8 L4.5 4.5 L0.8 8.2" fill="none" stroke="#909090" stroke-width="1.2"/></svg>
<div style="left:1211px;top:432px;width:21px;height:18px;overflow:hidden"><div class="t" style="left:0;top:3px;font-size:12px;line-height:14px;transform:scaleX(0.85);transform-origin:0 0">CREATE</div></div>
<svg style="position:absolute;left:851px;top:452px" width="14" height="14" viewBox="0 0 14 14"><rect x="0.6" y="0.6" width="12.8" height="12.8" rx="1.2" fill="#fff" stroke="#5d8fd6" stroke-width="1.2"/>
<rect x="2" y="2" width="10" height="1.3" fill="#5bb45b"/>
<rect x="2" y="4" width="10" height="8.4" fill="#b4cdf0"/><rect x="2.6" y="5" width="1.4" height="1.1" fill="#fff"/><rect x="4.9" y="5" width="3" height="1.1" fill="#fff"/><rect x="8.9" y="5" width="3.2" height="1.1" fill="#fff"/><rect x="2.6" y="7" width="1.4" height="1.1" fill="#fff"/><rect x="4.9" y="7" width="3" height="1.1" fill="#fff"/><rect x="8.9" y="7" width="3.2" height="1.1" fill="#fff"/><rect x="2.6" y="9" width="1.4" height="1.1" fill="#fff"/><rect x="4.9" y="9" width="3" height="1.1" fill="#fff"/><rect x="8.9" y="9" width="3.2" height="1.1" fill="#fff"/><rect x="2.6" y="11" width="1.4" height="1.1" fill="#fff"/><rect x="4.9" y="11" width="3" height="1.1" fill="#fff"/><rect x="8.9" y="11" width="3.2" height="1.1" fill="#fff"/></svg>
<div class="t" style="left:871.3px;top:453px;font-size:12px;line-height:14px;color:#000;letter-spacing:-0.179px;">sqlite_sequence</div>
<svg style="position:absolute;left:834px;top:455px" width="6" height="9" viewBox="0 0 6 9"><path d="M0.8 0.8 L4.5 4.5 L0.8 8.2" fill="none" stroke="#909090" stroke-width="1.2"/></svg>
<div style="left:1211px;top:450px;width:21px;height:18px;overflow:hidden"><div class="t" style="left:0;top:3px;font-size:12px;line-height:14px;transform:scaleX(0.85);transform-origin:0 0">CREATE</div></div>
<div style="position:absolute;left:807px;top:468px;width:425px;height:18px;background:#f5f5f5;"></div>
<svg style="position:absolute;left:830px;top:469px" width="16" height="16" viewBox="0 0 16 16"><path d="M1.5 3.5 l2 -2 h4 l7 7 l-6 6 l-7 -7 z" fill="#fff" stroke="#a0a0a0"/><path d="M7 6 l5 5 l-2 2 l-5 -5 z" fill="#7ec0f0"/><circle cx="4.5" cy="4.5" r="1" fill="none" stroke="#909090"/></svg>
<div class="t" style="left:851.7px;top:471px;font-size:12px;line-height:14px;color:#000;letter-spacing:-0.12px;">Indices (0)</div>
<svg style="position:absolute;left:831px;top:488px" width="14" height="14" viewBox="0 0 14 14"><rect x="0.5" y="0.5" width="13" height="13" fill="#fff" stroke="#7a9cd6"/><rect x="2" y="2" width="10" height="7" fill="#7aa6e6"/><rect x="2" y="9" width="10" height="3" fill="#c9e6b4"/><circle cx="7" cy="6" r="3" fill="#6ab04c"/><rect x="6" y="8" width="2" height="2" fill="#c07a2a"/></svg>
<div class="t" style="left:852.7px;top:489px;font-size:12px;line-height:14px;color:#000;transform:scaleX(0.9327);transform-origin:0px 0;">Views (0)</div>
<div style="position:absolute;left:807px;top:504px;width:425px;height:18px;background:#f5f5f5;"></div>
<svg style="position:absolute;left:830px;top:505px" width="17" height="17" viewBox="0 0 17 17"><defs><linearGradient id="tg" x1="0" x2="1"><stop offset="0" stop-color="#c4dcfa"/><stop offset="1" stop-color="#f4f9ff"/></linearGradient></defs><path d="M4.5 1.5 h9.5 a1.6 1.6 0 0 1 0.2 3.2 h-1 l-1.2 9.8 a1.6 1.6 0 0 1 -1.6 1.4 h-8.4 a1.6 1.6 0 0 1 -0.2 -3.2 h1 z" fill="url(#tg)" stroke="#3f72bf" stroke-width="1.1"/><path d="M2 13 h8" stroke="#3f72bf" stroke-width="0.8"/></svg>
<div class="t" style="left:852.7px;top:507px;font-size:12px;line-height:14px;color:#000;letter-spacing:-0.3px;">Triggers (0)</div>
<div style="position:absolute;left:807px;top:594px;width:425px;height:16px;background:#f0f0f0;"></div>
<div style="position:absolute;left:824px;top:594px;width:332px;height:16px;background:#cdcdcd;"></div>
<svg style="position:absolute;left:811px;top:597px" width="8" height="9" viewBox="0 0 8 9"><path d="M6.6 1.2 L1.8 4.5 L6.6 7.8" fill="none" stroke="#4a4a4a" stroke-width="1.9"/></svg>
<svg style="position:absolute;left:1220px;top:597px" width="8" height="9" viewBox="0 0 8 9"><path d="M1.2 1.2 L6 4.5 L1.2 7.8" fill="none" stroke="#4a4a4a" stroke-width="1.9"/></svg>
<div style="position:absolute;left:799px;top:620px;width:61px;height:19px;box-sizing:border-box;border:1px solid #d9d9d9;background:#f0f0f0;"></div>
<div style="position:absolute;left:859px;top:620px;width:42px;height:19px;box-sizing:border-box;border:1px solid #d9d9d9;background:#f0f0f0;"></div>
<div style="left:900px;top:620px;width:79px;height:21px;box-sizing:border-box;border:1px solid #d9d9d9;border-top:none;background:#fff"></div>
<div style="position:absolute;left:797px;top:620px;width:103px;height:1px;background:#a0a0a0;"></div>
<div style="position:absolute;left:979px;top:620px;width:263px;height:1px;background:#a0a0a0;"></div>
<div class="t" style="left:808.2px;top:624px;font-size:11px;line-height:12px;color:#000;transform:scaleX(0.9286);transform-origin:1px 0;">SQL Log</div>
<div class="t" style="left:870.9px;top:624px;font-size:11px;line-height:12px;color:#000;letter-spacing:0.1px;">Plot</div>
<div class="t" style="left:913.2px;top:625px;font-size:11px;line-height:12px;color:#000;transform:scaleX(0.9052);transform-origin:1px 0;">DB Schema</div>
<div class="t" style="left:1189.7px;top:645px;font-size:11px;line-height:12px;color:#6d6d6d;letter-spacing:0.325px;">UTF-8</div>
<div style="position:absolute;left:1223px;top:643px;width:1px;height:16px;background:#d0d0d0;"></div>
<div style="position:absolute;left:1239px;top:651px;width:2px;height:2px;background:#b8b8b8;"></div>
<div style="position:absolute;left:1235px;top:655px;width:2px;height:2px;background:#b8b8b8;"></div>
<div style="position:absolute;left:1239px;top:655px;width:2px;height:2px;background:#b8b8b8;"></div>
<div style="position:absolute;left:1231px;top:659px;width:2px;height:2px;background:#b8b8b8;"></div>
<div style="position:absolute;left:1235px;top:659px;width:2px;height:2px;background:#b8b8b8;"></div>
<div style="position:absolute;left:1239px;top:659px;width:2px;height:2px;background:#b8b8b8;"></div>
<div style="left:0;top:0;width:1243px;height:662px;box-sizing:border-box;border:1px solid #1a86e8"></div>
</body></html>
